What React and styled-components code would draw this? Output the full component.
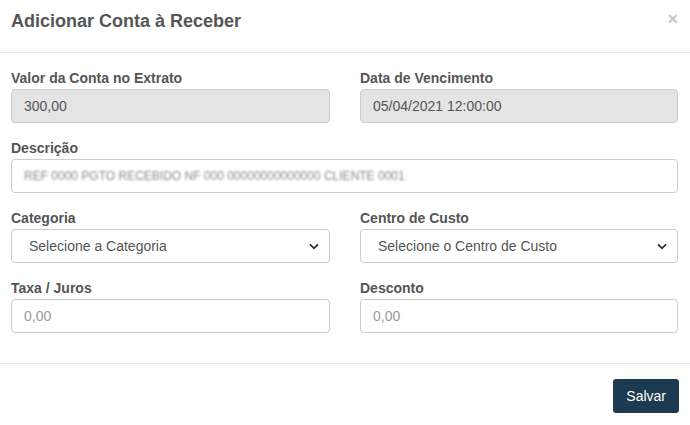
import React from "react";
import styled, { createGlobalStyle } from "styled-components";

const GlobalStyle = createGlobalStyle`
  body {
    margin: 0;
    background: #fff;
    font-family: "Liberation Sans", Arial, sans-serif;
  }
  * { box-sizing: border-box; }
`;

const Modal = styled.div`
  width: 690px;
  background: #fff;
`;

const Header = styled.div`
  display: flex;
  justify-content: space-between;
  align-items: flex-start;
  padding: 10px 12px 20px 11px;
  border-bottom: 1px solid #e5e5e5;
`;

const Title = styled.h4`
  margin: 0;
  font-size: 18px;
  line-height: 22px;
  font-weight: bold;
  color: #555;
`;

const Close = styled.button`
  border: none;
  background: none;
  padding: 0;
  margin-top: -2px;
  font-family: "Liberation Sans", Arial, sans-serif;
  font-size: 18px;
  font-weight: bold;
  line-height: 22px;
  color: #c8c8c8;
  cursor: pointer;
`;

const Body = styled.div`
  padding: 15px 12px 15px 11px;
  display: grid;
  grid-template-columns: 319px 318px;
  column-gap: 30px;
`;

const Field = styled.div`
  margin-bottom: 15px;
  grid-column: ${(p) => (p.$wide ? "1 / -1" : "auto")};
`;

const Label = styled.label`
  display: block;
  font-size: 14px;
  line-height: 20px;
  font-weight: bold;
  color: #555;
  margin-bottom: 1px;
`;

const Input = styled.input`
  display: block;
  width: 100%;
  height: 34px;
  padding: 0 12px;
  font-family: "Liberation Sans", Arial, sans-serif;
  font-size: 14px;
  color: #555;
  background: ${(p) => (p.disabled ? "#e4e4e4" : "#fff")};
  border: 1px solid #ccc;
  border-radius: 4px;
  outline: none;
  &::placeholder { color: #999; }
`;

const TextBox = styled.div`
  height: 34px;
  padding: 0 12px;
  display: flex;
  align-items: center;
  border: 1px solid #ccc;
  border-radius: 4px;
  overflow: hidden;
`;

const Blurred = styled.span`
  font-size: 12px;
  color: #8a8a8a;
  filter: blur(1.3px);
  white-space: nowrap;
`;

const SelectBox = styled.div`
  height: 34px;
  padding: 0 10px 0 17px;
  display: flex;
  align-items: center;
  justify-content: space-between;
  border: 1px solid #ccc;
  border-radius: 4px;
  font-size: 14px;
  color: #555;
`;

const Footer = styled.div`
  border-top: 1px solid #e5e5e5;
  padding: 15px 11px 15px 11px;
  display: flex;
  justify-content: flex-end;
`;

const SaveButton = styled.button`
  height: 34px;
  padding: 0 13px;
  border: none;
  border-radius: 3px;
  background: #1c3b53;
  color: #fff;
  font-family: "Liberation Sans", Arial, sans-serif;
  font-size: 14px;
  cursor: pointer;
`;

const Chevron = () => (
  <svg width="10" height="7" viewBox="0 0 10 7">
    <path d="M1 1.3 L5 5.3 L9 1.3" fill="none" stroke="#333" strokeWidth="1.8" />
  </svg>
);

export default function App() {
  return (
    <Modal>
      <GlobalStyle />
      <Header>
        <Title>Adicionar Conta à Receber</Title>
        <Close aria-label="Fechar">×</Close>
      </Header>
      <Body>
        <Field>
          <Label>Valor da Conta no Extrato</Label>
          <Input disabled value="300,00" readOnly />
        </Field>
        <Field>
          <Label>Data de Vencimento</Label>
          <Input disabled value="05/04/2021 12:00:00" readOnly />
        </Field>
        <Field $wide>
          <Label>Descrição</Label>
          <TextBox>
            <Blurred>REF 0000 PGTO RECEBIDO NF 000 00000000000000 CLIENTE 0001</Blurred>
          </TextBox>
        </Field>
        <Field>
          <Label>Categoria</Label>
          <SelectBox>
            <span>Selecione a Categoria</span>
            <Chevron />
          </SelectBox>
        </Field>
        <Field>
          <Label>Centro de Custo</Label>
          <SelectBox>
            <span>Selecione o Centro de Custo</span>
            <Chevron />
          </SelectBox>
        </Field>
        <Field>
          <Label>Taxa / Juros</Label>
          <Input placeholder="0,00" />
        </Field>
        <Field>
          <Label>Desconto</Label>
          <Input placeholder="0,00" />
        </Field>
      </Body>
      <Footer>
        <SaveButton>Salvar</SaveButton>
      </Footer>
    </Modal>
  );
}
